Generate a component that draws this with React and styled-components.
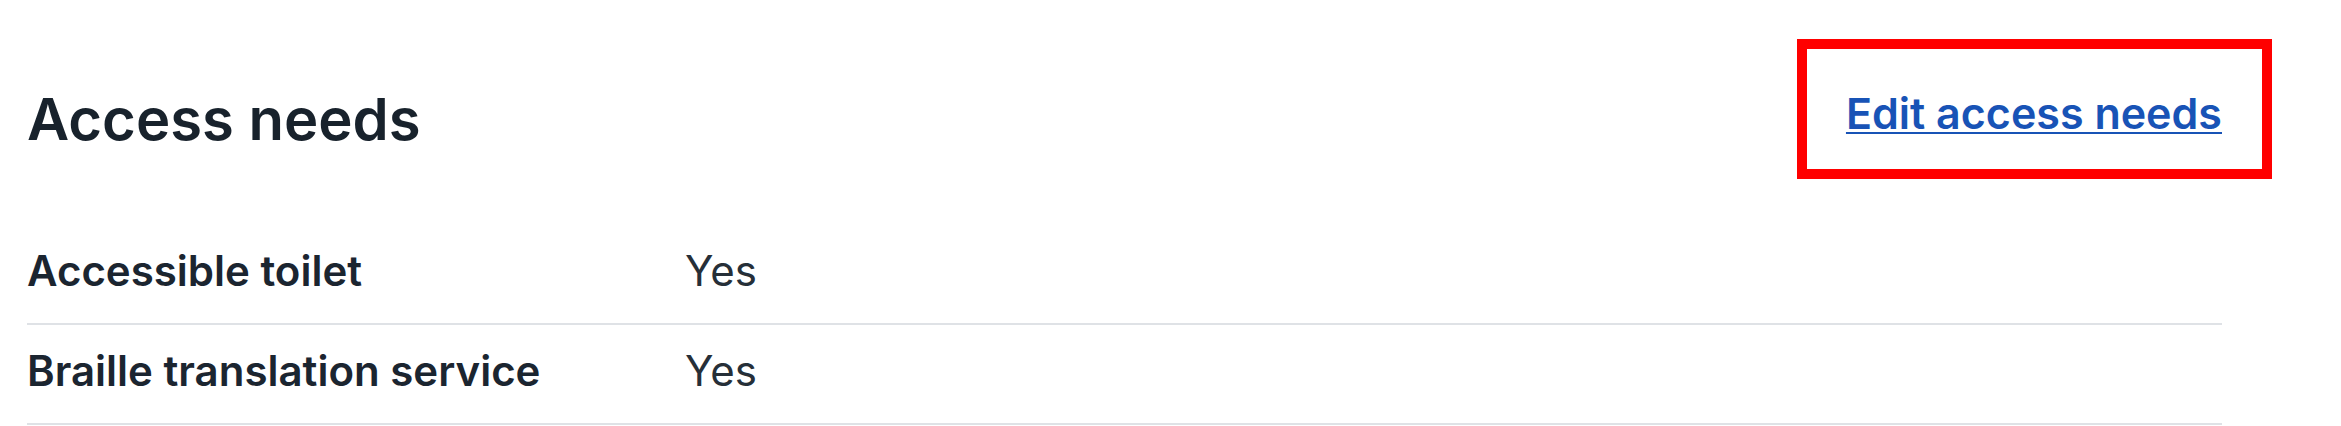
import React from "react";
import styled, { createGlobalStyle } from "styled-components";

const Global = createGlobalStyle`
  html, body { margin: 0; padding: 0; background: #ffffff; }
  body { font-family: Inter, "Noto Sans", "Liberation Sans", sans-serif; color: #1b2530; }
`;

const Page = styled.main`
  width: 2195px;
  padding: 84px 0 0 27px;
`;

const Header = styled.header`
  display: flex;
  justify-content: space-between;
  align-items: flex-start;
  margin-bottom: 71px;
`;

const Title = styled.h2`
  margin: 0;
  font-size: 58px;
  line-height: 70px;
  font-weight: 600;
  color: #18222c;
`;

const EditLink = styled.a`
  position: relative;
  display: inline-block;
  margin-top: 3px;
  font-size: 43px;
  line-height: 52px;
  font-weight: 600;
  color: #1853b6;
  text-decoration: underline;
  text-decoration-thickness: 2px;
  text-underline-offset: 3px;
  cursor: pointer;

  &::after {
    content: "";
    position: absolute;
    top: -48px;
    bottom: -40px;
    left: -49px;
    right: -50px;
    border: 10px solid #ff0000;
    pointer-events: none;
  }
`;

const List = styled.dl`
  margin: 0;
`;

const Row = styled.div`
  display: grid;
  grid-template-columns: 658px 1fr;
  padding: 21px 0 27px;
  border-bottom: 2px solid #dfe2e6;
`;

const Label = styled.dt`
  margin: 0;
  font-size: 42px;
  line-height: 50px;
  font-weight: 600;
  color: #1b2530;
`;

const Value = styled.dd`
  margin: 0;
  font-size: 42px;
  line-height: 50px;
  font-weight: 400;
  color: #262f38;
`;

const rows = [
  ["Accessible toilet", "Yes"],
  ["Braille translation service", "Yes"],
];

export default function App() {
  return (
    <>
      <Global />
      <Page>
        <Header>
          <Title>Access needs</Title>
          <EditLink href="#">Edit access needs</EditLink>
        </Header>
        <List>
          {rows.map(([k, v]) => (
            <Row key={k}>
              <Label>{k}</Label>
              <Value>{v}</Value>
            </Row>
          ))}
        </List>
      </Page>
    </>
  );
}
